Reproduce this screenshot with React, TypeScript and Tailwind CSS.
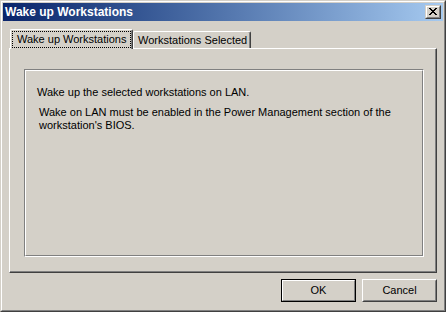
import React from "react";

function CloseGlyph() {
  return (
    <svg width="8" height="7" viewBox="0 0 8 7" shapeRendering="crispEdges" className="block">
      <path
        fill="#000"
        d="M0 0h2v1H0z M6 0h2v1H6z M1 1h2v1H1z M5 1h2v1H5z M2 2h4v1H2z M3 3h2v1H3z M2 4h4v1H2z M1 5h2v1H1z M5 5h2v1H5z M0 6h2v1H0z M6 6h2v1H6z"
      />
    </svg>
  );
}

function CloseButton() {
  return (
    <div className="w-[16px] h-[14px] bg-[#d4d0c8] border border-t-[#d4d0c8] border-l-[#d4d0c8] border-r-[#404040] border-b-[#404040]">
      <div className="w-full h-full border border-t-white border-l-white border-r-[#808080] border-b-[#808080] pl-[2px] pt-[1px]">
        <CloseGlyph />
      </div>
    </div>
  );
}

export default function App() {
  return (
    <div className="w-[446px] h-[312px] bg-[#d4d0c8] border border-t-[#d4d0c8] border-l-[#d4d0c8] border-r-[#404040] border-b-[#404040] font-['Liberation_Sans',Arial,sans-serif] text-[11px] leading-[13px] text-black">
      <div className="h-full border border-t-white border-l-white border-r-[#808080] border-b-[#808080] p-px flex flex-col">
        {/* Caption */}
        <div className="h-[18px] shrink-0 flex items-center justify-between pl-[2px] pr-[2px] bg-linear-to-r from-[#0a246a] to-[#a6caf0]">
          <span className="text-white font-bold text-[12px] leading-[14px]">Wake up Workstations</span>
          <CloseButton />
        </div>

        {/* Body */}
        <div className="flex-1 flex flex-col pl-[6px] pr-[6px] pt-[8px]">
          {/* Tabs */}
          <div className="flex items-end h-[19px]">
            <div className="relative z-10 ml-[1px] mb-[-1px] w-[123px] h-[20px] bg-[#d4d0c8] border-l border-t border-r border-l-white border-t-white border-r-[#404040] rounded-t-[2px] shadow-[inset_-1px_0_0_#808080]">
              <div className="mt-[1px] ml-[1px] w-[119px] h-[17px] border border-dotted border-black pl-[4px] pt-px whitespace-nowrap">
                Wake up Workstations
              </div>
            </div>
            <div className="w-[118px] h-[17px] bg-[#d4d0c8] border-l border-t border-r border-l-white border-t-white border-r-[#404040] rounded-t-[2px] shadow-[inset_-1px_0_0_#808080] pl-[4px] pt-[2px] whitespace-nowrap">
              Workstations Selected
            </div>
          </div>

          {/* Tab panel */}
          <div className="w-[428px] h-[225px] border border-t-white border-l-white border-r-[#404040] border-b-[#404040] shadow-[inset_-1px_-1px_0_#808080] pt-[20px] pl-[14px]">
            <div className="w-[400px] h-[188px] border border-t-[#808080] border-l-[#808080] border-r-white border-b-white">
              <div className="h-full border border-t-white border-l-white border-r-[#808080] border-b-[#808080] pl-[11px] pt-[15px]">
                <p>Wake up the selected workstations on LAN.</p>
                <p className="mt-[7px] ml-[2px]">
                  Wake on LAN must be enabled in the Power Management section of the
                  <br />
                  workstation's BIOS.
                </p>
              </div>
            </div>
          </div>

          {/* Buttons */}
          <div className="w-[428px] mt-[6px] flex justify-end gap-[6px]">
            <button className="w-[75px] h-[23px] bg-[#d4d0c8] border border-black">
              <div className="w-full h-full border border-t-white border-l-white border-r-[#808080] border-b-[#808080] flex items-center justify-center">
                OK
              </div>
            </button>
            <button className="w-[75px] h-[23px] bg-[#d4d0c8] border border-t-white border-l-white border-r-[#404040] border-b-[#404040]">
              <div className="w-full h-full border border-t-[#d4d0c8] border-l-[#d4d0c8] border-r-[#808080] border-b-[#808080] flex items-center justify-center">
                Cancel
              </div>
            </button>
          </div>
        </div>
      </div>
    </div>
  );
}
